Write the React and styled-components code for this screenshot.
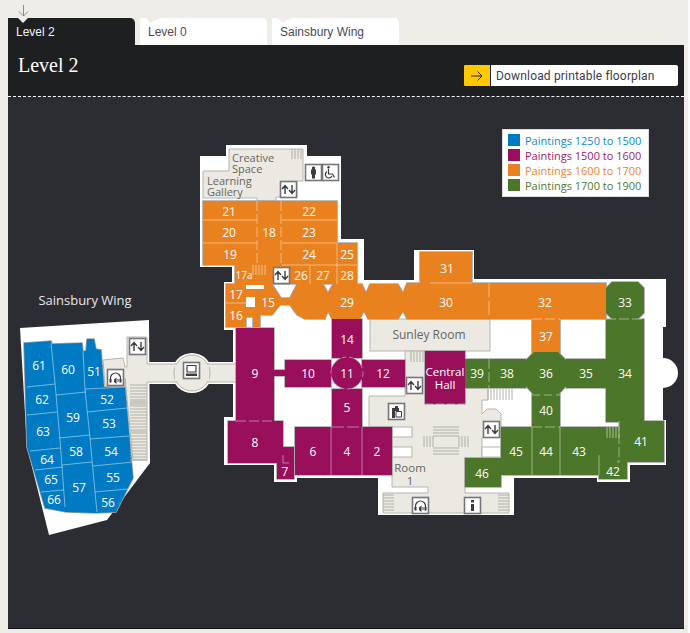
import React from 'react';
import styled, { createGlobalStyle } from 'styled-components';

const Global = createGlobalStyle`
  html, body { margin: 0; padding: 0; background: #fbfbfb; }
  body { width: 690px; height: 633px; overflow: hidden; }
`;

const Page = styled.div`
  width: 688px;
  height: 633px;
  box-sizing: border-box;
  background: #eeede8;
  padding: 18px 4px 0 8px;
  font-family: "Liberation Sans", Arial, sans-serif;
  display: flex;
  flex-direction: column;
`;

const Tabs = styled.nav`
  display: flex;
  gap: 5px;
  position: relative;
`;

const Tab = styled.a`
  position: relative;
  width: 127px;
  height: 27px;
  box-sizing: border-box;
  padding: 7px 0 0 8px;
  border-radius: 0 5px 0 0;
  background: ${p => (p.$active ? '#1e1f21' : '#ffffff')};
  color: ${p => (p.$active ? '#f2f2f2' : '#4b4b57')};
  font-size: 12px;
  line-height: 14px;
  &::before {
    content: '';
    position: absolute;
    top: 0;
    left: ${p => (p.$active ? '10px' : '6px')};
    width: ${p => (p.$active ? '10px' : '14px')};
    height: 5px;
    background: #eeede8;
    clip-path: ${p => (p.$active ? 'polygon(0 0, 100% 0, 50% 100%)' : 'polygon(0 0, 100% 0, 30% 100%)')};
  }
`;

const TabArrow = styled.svg`
  position: absolute;
  left: 10px;
  top: -13px;
  width: 11px;
  height: 12px;
`;

const Header = styled.header`
  height: 51px;
  background: #1e1f21;
  display: flex;
  justify-content: space-between;
  align-items: flex-start;
  padding: 0 6px 0 10px;
  border-bottom: 1px dashed #ffffff;
`;

const Title = styled.h2`
  margin: 9px 0 0;
  color: #ffffff;
  font-family: "Liberation Serif", Georgia, serif;
  font-weight: 400;
  font-size: 20px;
  line-height: 23px;
`;

const Download = styled.a`
  margin-top: 20px;
  display: flex;
  height: 21px;
  width: 214px;
  border-radius: 2px;
  overflow: hidden;
  background: #ffffff;
  color: #3b3b4d;
  font-family: "Roboto", Arial, sans-serif;
  font-size: 12px;
  letter-spacing: 0.17px;
  line-height: 22px;
`;

const DownloadIcon = styled.span`
  width: 26px;
  background: #ffc800;
  border-right: 1px solid #1e1f21;
  display: flex;
  align-items: center;
  justify-content: center;
`;

const DownloadText = styled.span`
  padding-left: 5px;
`;

const MapArea = styled.section`
  position: relative;
  width: 676px;
  height: 531px;
  background: #2c2d32;
  border-bottom: 1px solid #141416;
`;

const MapSvg = styled.svg`
  display: block;
  width: 676px;
  height: 531px;
`;

const Legend = styled.ul`
  position: absolute;
  left: 494px;
  top: 32px;
  width: 147px;
  height: 68px;
  box-sizing: border-box;
  margin: 0;
  padding: 4px 5px;
  list-style: none;
  background: #ffffff;
  border: 1px solid #ddd;
  display: flex;
  flex-direction: column;
  gap: 3px;
`;

const LegendItem = styled.li`
  display: flex;
  align-items: center;
  gap: 5px;
  height: 12px;
  color: ${p => p.$color};
  font-family: "Open Sans", "Noto Sans", sans-serif;
  font-size: 11px;
  white-space: nowrap;
`;

const Swatch = styled.span`
  width: 12px;
  height: 12px;
  background: ${p => p.$color};
`;

const COLORS = { blue: '#007ac2', purple: '#990f5c', orange: '#e8811e', green: '#4c7629' };
const TEXTCOL = { blue: '#1087c9', purple: '#a01a68', orange: '#e8832a', green: '#4f7a30' };

const Ground = styled.polygon`
  fill: #ffffff;
`;
const Floor = styled.polygon`
  fill: #ebe9e2;
  stroke: #b4b4af;
  stroke-width: 1;
`;
const Hole = styled.rect`
  fill: #ffffff;
  stroke: ${p => (p.$plain ? 'none' : '#b4b4af')};
  stroke-width: 1;
`;
const RoomEdge = styled.polygon`
  fill: ${p => COLORS[p.$kind]};
  stroke: #a6a6a6;
  stroke-width: 1.6;
`;
const RoomFill = styled.polygon`
  fill: ${p => COLORS[p.$kind]};
`;
const RoundRoom = styled.circle`
  fill: ${COLORS.purple};
  stroke: #c77aa3;
  stroke-width: 1;
  stroke-dasharray: 4 3;
`;
const Divider = styled.line`
  stroke: #ffffff;
  stroke-opacity: ${p => p.$o || 0.45};
  stroke-width: 1;
  stroke-dasharray: ${p => p.$dash || 'none'};
`;
const RoomLabel = styled.text`
  fill: #ffffff;
  font-family: "Open Sans", "Noto Sans", sans-serif;
  font-size: ${p => p.$size || 12}px;
  text-anchor: middle;
  dominant-baseline: central;
`;
const PlaceLabel = styled.text`
  fill: ${p => p.$fill || '#66665f'};
  font-family: "Open Sans", "Noto Sans", sans-serif;
  font-size: ${p => p.$size || 11}px;
  text-anchor: ${p => p.$anchor || 'middle'};
  dominant-baseline: central;
`;
const StairLine = styled.line`
  stroke: ${p => p.$color || '#b0b0a9'};
  stroke-width: 1;
`;
const Landing = styled.rect`
  fill: #c9c8c1;
`;
const IconFrame = styled.rect`
  fill: #ffffff;
  stroke: #75757a;
  stroke-width: 1.6;
`;
const Glyph = styled.path`
  fill: none;
  stroke: #3c3c40;
  stroke-width: ${p => p.$w || 1.2};
`;
const GlyphFill = styled.path`
  fill: #3c3c40;
`;

const r = (x1, y1, x2, y2) => `${x1},${y1} ${x2},${y1} ${x2},${y2} ${x1},${y2}`;

const rooms = [
  ['orange', r(203, 201, 337, 265)],
  ['orange', r(235, 265, 357, 284)],
  ['orange', r(337, 243, 357, 265)],
  ['orange', '226,284 272,284 281,298 290,298 297,284 323,284 328,293 333,284 362,284 366,293 370,284 398,284 403,293 407,283 606,283 606,319 407,319 403,311 398,319 368,319 364,311 360,319 332,319 328,311 325,319 305,319 297,315 290,305 280,305 272,315 260,315 260,327 253,327 253,317 246,317 246,327 226,327'],
  ['orange', r(420, 252, 472, 283)],
  ['orange', r(532, 319, 560, 353)],
  ['purple', r(236, 328, 274, 421)],
  ['purple', r(228, 421, 283, 463)],
  ['purple', '283,447 294,447 294,479 277,479 277,463 283,463'],
  ['purple', r(274, 370, 285, 376)],
  ['purple', r(285, 360, 331, 387)],
  ['purple', r(332, 319, 362, 358)],
  ['purple', r(362, 360, 405, 387)],
  ['purple', r(332, 389, 362, 427)],
  ['purple', r(295, 427, 392, 475)],
  ['purple', r(425, 351, 465, 404)],
  ['green', '612,282 638,282 644,288 644,313 638,319 612,319 606,313 606,288'],
  ['green', r(606, 319, 644, 422)],
  ['green', r(566, 359, 606, 388)],
  ['green', r(465, 359, 526, 388)],
  ['green', '534,352 558,352 567,361 567,385 558,395 534,395 525,385 525,361'],
  ['green', r(532, 394, 560, 427)],
  ['green', r(501, 427, 599, 475)],
  ['green', r(599, 427, 619, 462)],
  ['green', r(619, 421, 664, 462)],
  ['green', r(599, 462, 627, 479)],
  ['green', r(465, 458, 501, 487)],
  ['blue', '24,343 51,341 52,344 82,343 83,351 86,351 87,339 94,339 96,349 101,350 104,387 125,387 133,478 116,512 96,513 66,512 45,508 27,447'],
];

const dividers = [
  [203, 220, 257, 220], [282, 220, 337, 220], [203, 243, 257, 243], [282, 243, 337, 243], [282, 265, 357, 265],
  [257, 201, 257, 265, '10 3'], [281, 201, 281, 284, '10 3'], [310, 265, 310, 284], [337, 243, 337, 284], [226, 303, 246, 303],
  [430, 283, 472, 283], [489, 283, 489, 319, '14 4'], [532, 319, 560, 319, '10 3'],
  [236, 421, 274, 421, '10 3'], [331, 427, 331, 475], [362, 427, 362, 475], [332, 427, 362, 427, '12 3'], [283, 455, 283, 463], [283, 463, 289, 463],
  [425, 404, 465, 404, '8 3'], [489, 359, 489, 388, '10 3'], [532, 427, 532, 475], [560, 427, 560, 475], [532, 427, 560, 427, '10 3'],
  [599, 455, 599, 475], [606, 319, 644, 319, '10 3'], [619, 421, 619, 462, '10 3'], [617, 462, 619, 462],
  [532, 395, 560, 395, '8 4'],
  [27, 387, 55, 384], [27, 415, 57, 412], [30, 451, 60, 448], [35, 470, 63, 467], [41, 492, 64, 490],
  [51, 343, 55, 383], [55, 383, 60, 440], [60, 440, 65, 507],
  [56, 395, 86, 392], [59, 438, 90, 435], [62, 465, 92, 462],
  [83, 351, 85, 390], [85, 390, 90, 438], [90, 438, 95, 492], [95, 492, 97, 512],
  [85, 389, 125, 387], [87, 412, 127, 408], [90, 439, 129, 436], [93, 466, 133, 462], [95, 492, 128, 489],
];

const labels = [
  ['21', 229, 211], ['22', 309, 211], ['20', 229, 232], ['18', 269, 232], ['23', 309, 232], ['19', 230, 254], ['24', 309, 254], ['25', 347, 254],
  ['26', 301, 275], ['27', 323, 275], ['28', 347, 275], ['17', 236, 294], ['15', 268, 302], ['29', 347, 302], ['16', 236, 315],
  ['30', 446, 302], ['31', 447, 268], ['32', 545, 302], ['37', 546, 336], ['33', 625, 302], ['34', 625, 373], ['35', 586, 373], ['36', 546, 373],
  ['38', 507, 373], ['39', 477, 373], ['40', 546, 410], ['45', 516, 451], ['44', 546, 451], ['43', 579, 451], ['41', 641, 441], ['42', 613, 471], ['46', 482, 473],
  ['14', 347, 339], ['9', 255, 373], ['10', 308, 373], ['11', 347, 373], ['12', 383, 373], ['5', 347, 407], ['8', 255, 442], ['6', 313, 451], ['4', 347, 451], ['2', 377, 451], ['7', 285, 471],
  ['61', 39, 365], ['60', 68, 369], ['51', 94, 371], ['62', 42, 399], ['52', 107, 399], ['59', 73, 417], ['53', 109, 423], ['63', 43, 431], ['58', 76, 451], ['54', 111, 451],
  ['64', 47, 459], ['65', 51, 479], ['55', 113, 477], ['57', 79, 487], ['66', 54, 499], ['56', 108, 502],
];

const HStairs = ({ x1, x2, y1, y2, step = 3, color }) => {
  const out = [];
  for (let y = y1; y <= y2; y += step) out.push(<StairLine key={y} x1={x1} x2={x2} y1={y} y2={y} $color={color} />);
  return <g>{out}</g>;
};
const VStairs = ({ x1, x2, y1, y2, step = 3, color }) => {
  const out = [];
  for (let x = x1; x <= x2; x += step) out.push(<StairLine key={x} x1={x} x2={x} y1={y1} y2={y2} $color={color} />);
  return <g>{out}</g>;
};

const Icon = ({ x, y, s = 16, children }) => (
  <g transform={`translate(${x} ${y})`}>
    <IconFrame x="0.5" y="0.5" width={s} height={s} />
    {children}
  </g>
);
const Lift = ({ x, y }) => (
  <Icon x={x} y={y}>
    <Glyph d="M5 13V5M2 8l3-3.5L8 8M12 4v8M9 9l3 3.5L15 9" $w={1.4} />
  </Icon>
);
const Audio = ({ x, y }) => (
  <Icon x={x} y={y}>
    <Glyph d="M3.5 13V9a5 5 0 0 1 10 0v4" />
    <GlyphFill d="M2.5 10h2v3.5h-2zM12.500 10h2v3.500h-2zM7 10.500l2.500-2v6.500l-2.500-2zM10.500 10v3h1v-3z" />
  </Icon>
);

const GROUND_MAIN = '200,156 226,156 226,145 307,145 307,156 341,156 341,239 364,239 364,280 414,280 414,250 474,250 474,279 666,279 666,327 663,327 663,420 666,420 666,465 630,465 630,482 597,482 597,478 514,478 514,515 378,515 378,478 297,478 297,482 274,482 274,465 224,465 224,417 233,417 233,330 224,330 224,282 232,282 232,267 200,267';

export default function App() {
  return (
    <>
      <Global />
      <Page>
        <Tabs>
          <TabArrow viewBox="0 0 11 12">
            <path d="M5.500 0V11M1 6.500l4.500 4.500L10 6.500" fill="none" stroke="#8b8b88" strokeWidth="1" />
          </TabArrow>
          <Tab $active>Level 2</Tab>
          <Tab>Level 0</Tab>
          <Tab>Sainsbury Wing</Tab>
        </Tabs>
        <Header>
          <Title>Level 2</Title>
          <Download>
            <DownloadIcon>
              <svg width="12" height="10" viewBox="0 0 12 10">
                <path d="M0 5H11M6.500 .5L11 5 6.500 9.500" fill="none" stroke="#222" strokeWidth="1" />
              </svg>
            </DownloadIcon>
            <DownloadText>Download printable floorplan</DownloadText>
          </Download>
        </Header>
        <MapArea>
          <MapSvg viewBox="8 97 676 531">
            <Ground points={GROUND_MAIN} />
            <circle cx="663" cy="373" r="15" fill="#fff" />
            <Ground points="20,328 149,320 150,463 107,520 49,535 27,447" />
            <Ground points="147,362 236,362 236,384 147,384" />
            <circle cx="192" cy="373" r="20" fill="#fff" />

            <Floor points="229,149 303,149 303,181 297,181 297,197 276,197 276,201 257,201 257,198 203,198 203,171 229,171" />
            <Floor points="370,319 490,319 490,351 370,351" />
            <Floor points="405,351 425,351 425,404 465,404 465,388 488,388 488,400 482,400 482,414 487,409 496,409 501,414 501,437 482,437 482,458 465,458 465,493 509,493 509,513 383,513 383,493 428,493 428,487 392,487 392,427 369,427 369,396 405,396" />
            <Floor points="103,360 123,358 125,367 127,367 127,337 147,337 147,364 236,364 236,382 147,382 147,460 133,460 125,378 125,387 105,387" />
            <circle cx="192" cy="373" r="18" fill="#ebe9e2" stroke="#b4b4af" />
            <rect x="175" y="365" width="34" height="16" fill="#ebe9e2" />
            <Hole x="392" y="427" width="20" height="10" />
            <Hole x="392" y="447" width="20" height="10" />
            <Hole x="482" y="447" width="19" height="10" />

            {rooms.map(([k, pts], i) => <RoomEdge key={i} $kind={k} points={pts} />)}
            {rooms.map(([k, pts], i) => <RoomFill key={i} $kind={k} points={pts} />)}
            <Hole x="246" y="285" width="18" height="4" $plain />
            <Hole x="246" y="297" width="9" height="10" $plain />
            <RoundRoom cx="347" cy="373" r="16" />
            {dividers.map(([x1, y1, x2, y2, d], i) => <Divider key={i} x1={x1} y1={y1} x2={x2} y2={y2} $dash={d} />)}

            <VStairs x1={292} x2={303} y1={149} y2={159} />
            <VStairs x1={253} x2={266} y1={265} y2={275} color="#f3c48f" />
            <VStairs x1={411} x2={425} y1={351} y2={362} />
            <VStairs x1={488} x2={512} y1={388} y2={400} />
            <VStairs x1={424} x2={433} y1={436} y2={447} />
            <VStairs x1={459} x2={468} y1={436} y2={447} />
            <VStairs x1={607} x2={619} y1={427} y2={438} color="#a9bf97" />
            <HStairs x1={433} x2={459} y1={427} y2={438} />
            <HStairs x1={433} x2={459} y1={448} y2={456} />
            <HStairs x1={383} x2={394} y1={495} y2={510} />
            <HStairs x1={498} x2={509} y1={495} y2={510} />
            <HStairs x1={130} x2={147} y1={385} y2={460} />
            <Landing x="130" y="399" width="17" height="6" />
            <Landing x="130" y="430" width="17" height="4" />

            <Icon x={305} y={164}>
              <GlyphFill d="M8.500 2.500a1.700 1.700 0 1 1-.01 0zM6 5.500h5v5h-1v4H7v-4H6z" />
            </Icon>
            <Icon x={322} y={164}>
              <GlyphFill d="M6.500 2a1.300 1.300 0 1 1-.01 0z" />
              <Glyph d="M6.500 5v5h4l2 3.500M5 7.500a3.500 3.500 0 1 0 5 4.500" />
            </Icon>
            <Lift x={280} y={181} />
            <Lift x={273} y={267} />
            <Lift x={129} y={338} />
            <Lift x={406} y={377} />
            <Lift x={483} y={421} />
            <Audio x={107} y={369} />
            <Audio x={412} y={497} />
            <Icon x={183} y={362}>
              <Glyph d="M4 3.500h9v6.500H4z" />
              <GlyphFill d="M3 11.500h11v2.500H3z" />
            </Icon>
            <Icon x={388} y={403}>
              <GlyphFill d="M4 5h3V3h3v2h1v3H7v7H4z" />
              <Glyph d="M8 8.500h5.500V14H8z" $w={1} />
            </Icon>
            <Icon x={464} y={497}>
              <GlyphFill d="M7 3h3v2.500H7zM7 7h3v7H7z" />
            </Icon>

            {labels.map(([t, x, y]) => <RoomLabel key={t} x={x} y={y}>{t}</RoomLabel>)}
            <RoomLabel x={244} y={275} $size={10}>17a</RoomLabel>
            <RoomLabel $size={11.5} y={371}>
              <tspan x={445}>Central</tspan>
              <tspan x={445} dy={13}>Hall</tspan>
            </RoomLabel>
            <PlaceLabel y={157} $anchor="start">
              <tspan x={232}>Creative</tspan>
              <tspan x={232} dy={11}>Space</tspan>
            </PlaceLabel>
            <PlaceLabel y={180} $anchor="start">
              <tspan x={207}>Learning</tspan>
              <tspan x={207} dy={11}>Gallery</tspan>
            </PlaceLabel>
            <PlaceLabel x={429} y={334} $size={12}>Sunley Room</PlaceLabel>
            <PlaceLabel y={467} $size={11.5}>
              <tspan x={410}>Room</tspan>
              <tspan x={410} dy={13}>1</tspan>
            </PlaceLabel>
            <PlaceLabel x={85} y={300} $size={13} $fill="#e8e8e8">Sainsbury Wing</PlaceLabel>
          </MapSvg>
          <Legend>
            <LegendItem $color={TEXTCOL.blue}><Swatch $color={COLORS.blue} />Paintings 1250 to 1500</LegendItem>
            <LegendItem $color={TEXTCOL.purple}><Swatch $color={COLORS.purple} />Paintings 1500 to 1600</LegendItem>
            <LegendItem $color={TEXTCOL.orange}><Swatch $color={COLORS.orange} />Paintings 1600 to 1700</LegendItem>
            <LegendItem $color={TEXTCOL.green}><Swatch $color={COLORS.green} />Paintings 1700 to 1900</LegendItem>
          </Legend>
        </MapArea>
      </Page>
    </>
  );
}
